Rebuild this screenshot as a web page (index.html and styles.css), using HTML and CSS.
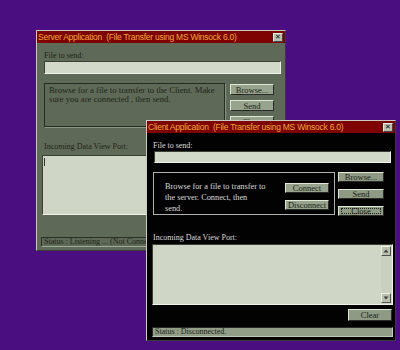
FILE: index.html
```html
<!DOCTYPE html>
<html>
<head>
<meta charset="utf-8">
<link rel="stylesheet" href="styles.css">
</head>
<body>
<div class="desktop">
  <div class="win server">
    <div class="titlebar"><span class="ttext">Server Application  (File Transfer using MS Winsock 6.0)</span><span class="xbtn">✕</span></div>
    <div class="wbody">
      <div class="lbl">File to send:</div>
      <div class="textbox"></div>
      <div class="mid">
        <div class="frame s-frame">Browse for a file to transfer to the Client. Make sure you are connected , then send.</div>
        <div class="btncol s-btncol">
          <div class="btn"><u>B</u>rowse...</div>
          <div class="btn"><u>S</u>end</div>
          <div class="btn"><u>C</u>lose</div>
        </div>
      </div>
      <div class="lbl lbl2">Incoming Data View Port:</div>
      <div class="textarea s-area"><span class="caret"></span></div>
      <div class="status s-status">Status : Listening ... (Not Connected)</div>
    </div>
  </div>

  <div class="win client">
    <div class="titlebar"><span class="ttext">Client Application  (File Transfer using MS Winsock 6.0)</span><span class="xbtn">✕</span></div>
    <div class="wbody">
      <div class="lbl">File to send:</div>
      <div class="textbox"></div>
      <div class="mid">
        <div class="frame c-frame">
          <div class="ftext">Browse for a file to transfer to<br>the server. Connect, then<br>send.</div>
          <div class="fbtns">
            <div class="btn">Connect</div>
            <div class="btn">Disconnect</div>
          </div>
        </div>
        <div class="btncol c-btncol">
          <div class="btn"><u>B</u>rowse...</div>
          <div class="btn"><u>S</u>end</div>
          <div class="btn focus"><u>C</u>lose</div>
        </div>
      </div>
      <div class="lbl lbl2">Incoming Data View Port:</div>
      <div class="textarea c-area">
        <div class="scroll">
          <div class="sarrow"><svg width="6" height="4" viewBox="0 0 6 4"><path d="M3 0.5 L5.5 3.5 L0.5 3.5 Z" fill="#404040"/></svg></div>
          <div class="strack"></div>
          <div class="sarrow"><svg width="6" height="4" viewBox="0 0 6 4"><path d="M0.5 0.5 L5.5 0.5 L3 3.5 Z" fill="#404040"/></svg></div>
        </div>
      </div>
      <div class="clearrow"><div class="btn clearbtn">Clear</div></div>
      <div class="status c-status">Status : Disconnected.</div>
    </div>
  </div>
</div>
</body>
</html>
```

FILE: styles.css
```css
html, body {
  margin: 0;
  padding: 0;
}
body {
  width: 400px;
  height: 350px;
  overflow: hidden;
  background: #4a0e80;
}
.desktop {
  position: relative;
  width: 400px;
  height: 350px;
  background: #4a0e80;
}
.win {
  position: absolute;
  box-sizing: border-box;
  width: 250px;
  height: 221px;
  border: 1px solid;
  border-color: #c8ccc0 #3a3a3a #3a3a3a #c8ccc0;
  display: flex;
  flex-direction: column;
}
.server {
  left: 36px;
  top: 30px;
  background: #5e6a57;
}
.client {
  left: 146px;
  top: 120px;
  background: #020202;
}
.titlebar {
  height: 12px;
  background: #7e0202;
  display: flex;
  align-items: center;
  justify-content: space-between;
  padding: 0 2px 0 1px;
}
.ttext {
  font-family: "Liberation Sans", Arial, sans-serif;
  font-size: 8.5px;
  letter-spacing: -0.25px;
  color: #f2aa3c;
  white-space: pre;
  line-height: 12px;
}
.xbtn {
  box-sizing: border-box;
  width: 10px;
  height: 9px;
  background: #b9c0b0;
  border: 1px solid;
  border-color: #e8ece0 #404040 #404040 #e8ece0;
  font-family: "DejaVu Sans", sans-serif;
  font-size: 7px;
  font-weight: bold;
  line-height: 7px;
  text-align: center;
  color: #101010;
}
.wbody {
  display: flex;
  flex-direction: column;
  font-family: "Liberation Serif", "Times New Roman", serif;
  font-size: 8px;
}
.server .wbody {
  padding-left: 7px;
  color: #1e2418;
}
.client .wbody {
  padding-left: 6px;
  color: #dcdcdc;
}
.lbl {
  margin-top: 8px;
  height: 10px;
  line-height: 10px;
}
.textbox {
  background: #d3d9c9;
  border: 1px solid;
  border-color: #3a4036 #f0f4ea #f0f4ea #3a4036;
  box-sizing: border-box;
  width: 237px;
}
.server .textbox {
  height: 13px;
}
.client .textbox {
  height: 12px;
  margin-left: 1px;
}
.mid {
  display: flex;
  margin-top: 9px;
}
.frame {
  box-sizing: border-box;
  border: 1px solid;
}
.s-frame {
  width: 181px;
  height: 44px;
  border-color: #262c22;
  box-shadow: 1px 1px 0 #8a9482;
  padding: 2px 4px 0 4px;
  line-height: 9px;
  font-size: 8.7px;
}
.c-frame {
  width: 182px;
  height: 43px;
  border-color: #b0b0b0;
  display: flex;
  justify-content: space-between;
}
.ftext {
  padding: 8px 0 0 11px;
  line-height: 11px;
  font-size: 8.3px;
  white-space: nowrap;
}
.fbtns {
  display: flex;
  flex-direction: column;
  gap: 7px;
  margin: 10px 5px 0 0;
}
.fbtns .btn {
  width: 44px;
  height: 10px;
}
.btncol {
  display: flex;
  flex-direction: column;
}
.s-btncol {
  margin-left: 5px;
  margin-top: 1px;
  gap: 5px;
}
.c-btncol {
  margin-left: 3px;
  gap: 7px;
}
.btn {
  box-sizing: border-box;
  background: #97a38c;
  border: 1px solid;
  border-color: #dfe6d6 #2a2a2a #2a2a2a #dfe6d6;
  color: #1a1e16;
  font-family: "Liberation Serif", "Times New Roman", serif;
  font-size: 8.5px;
  text-align: center;
  display: flex;
  align-items: center;
  justify-content: center;
  line-height: 8px;
  position: relative;
}
.s-btncol .btn {
  width: 44px;
  height: 11px;
}
.c-btncol .btn {
  width: 46px;
  height: 10px;
  background: #8e9a84;
}
.focus::after {
  content: "";
  position: absolute;
  left: 2px;
  right: 2px;
  top: 1px;
  bottom: 1px;
  border: 1px dotted #202020;
}
.lbl2 {
  margin-top: 15px;
}
.client .lbl2 {
  margin-top: 17px;
}
.textarea {
  box-sizing: border-box;
  background: #d0d6c6;
  border: 1px solid;
  border-color: #3a4036 #eef2e8 #eef2e8 #3a4036;
  position: relative;
}
.s-area {
  margin-top: 3px;
  margin-left: -2px;
  width: 241px;
  height: 60px;
}
.caret {
  position: absolute;
  left: 1px;
  top: 2px;
  width: 1px;
  height: 8px;
  background: #303030;
}
.c-area {
  margin-top: 1px;
  margin-left: -1px;
  width: 241px;
  height: 61px;
  display: flex;
  justify-content: flex-end;
}
.scroll {
  width: 10px;
  margin: 1px 1px 1px 0;
  display: flex;
  flex-direction: column;
  background: #c8d0c0;
}
.sarrow {
  box-sizing: border-box;
  height: 10px;
  background: #b8c0ae;
  border: 1px solid;
  border-color: #eef2e8 #505050 #505050 #eef2e8;
  display: flex;
  align-items: center;
  justify-content: center;
}
.strack {
  flex: 1;
}
.clearrow {
  display: flex;
  justify-content: flex-end;
  width: 240px;
  margin-left: -1px;
  margin-top: 4px;
}
.clearbtn {
  width: 44px;
  height: 12px;
  background: #8e9a84;
}
.status {
  box-sizing: border-box;
  height: 10px;
  line-height: 8px;
  padding-left: 2px;
  border: 1px solid;
  white-space: nowrap;
  overflow: hidden;
}
.s-status {
  margin-top: 22px;
  margin-left: -3px;
  width: 241px;
  border-color: #2a3026 #a0aa98 #a0aa98 #2a3026;
  color: #1e2418;
}
.c-status {
  margin-top: 6px;
  margin-left: -1px;
  width: 241px;
  background: #929e88;
  border-color: #2a2a2a #c0c8b8 #c0c8b8 #2a2a2a;
  color: #1a1e16;
}
```
